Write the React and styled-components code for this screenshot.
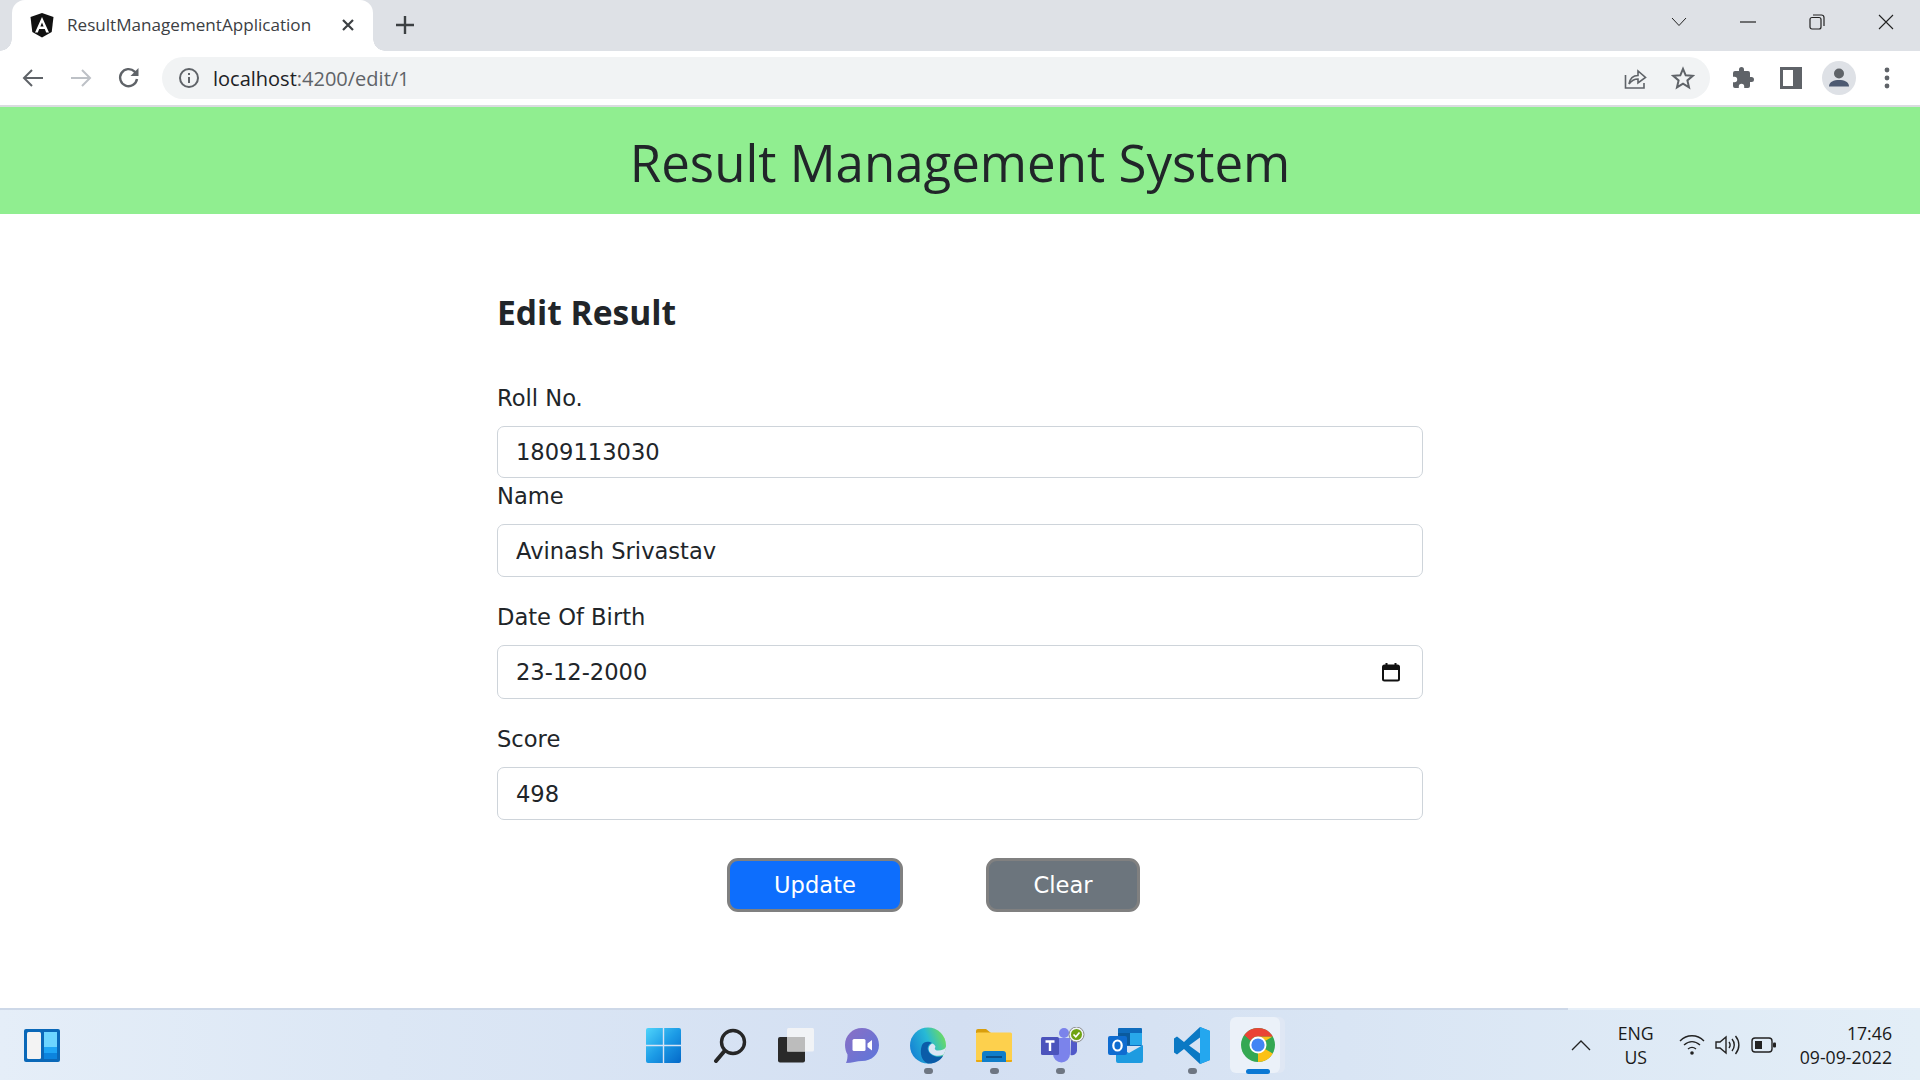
import React from "react";
import styled, { createGlobalStyle } from "styled-components";

const GlobalStyle = createGlobalStyle`
  html, body {
    margin: 0;
    padding: 0;
    overflow: hidden;
    background: #fff;
  }
  * {
    box-sizing: border-box;
  }
`;

const fields = [
  { id: "roll", label: "Roll No.", value: "1809113030", gap: 0, height: 52 },
  { id: "name", label: "Name", value: "Avinash Srivastav", gap: 22, height: 53 },
  { id: "dob", label: "Date Of Birth", value: "23-12-2000", gap: 22, height: 54, date: true },
  { id: "score", label: "Score", value: "498", gap: 0, height: 53 },
];

const AngularIcon = () => (
  <svg width="26" height="26" viewBox="0 0 26 26">
    <path d="M13 1 L24.5 5 L22.7 20 L13 25.5 L3.3 20 L1.5 5 Z" fill="#111" />
    <path d="M13 5 L6 20.5 H8.8 L10.2 17 H15.8 L17.2 20.5 H20 Z M11.4 14.6 L13 10.4 L14.6 14.6 Z" fill="#fff" fillRule="evenodd" />
  </svg>
);

const BackIcon = () => (
  <svg width="24" height="24" viewBox="0 0 24 24" fill="none" stroke="#5f6368" strokeWidth="2">
    <path d="M22 12 H3 M11 4 L3 12 L11 20" />
  </svg>
);

const ForwardIcon = () => (
  <svg width="24" height="24" viewBox="0 0 24 24" fill="none" stroke="#bdc1c6" strokeWidth="2">
    <path d="M2 12 H21 M13 4 L21 12 L13 20" />
  </svg>
);

const ReloadIcon = () => (
  <svg width="24" height="24" viewBox="0 0 24 24" fill="none" stroke="#5f6368" strokeWidth="2.4">
    <path d="M20 13 A8.5 8.5 0 1 1 17.6 5.6 L20 8" />
    <path d="M21.5 2 V10 H13.5 Z" fill="#5f6368" stroke="none" />
  </svg>
);

const InfoIcon = () => (
  <svg width="22" height="22" viewBox="0 0 22 22" fill="none" stroke="#5f6368" strokeWidth="2">
    <circle cx="11" cy="11" r="9" />
    <path d="M11 10 V16" />
    <path d="M11 6 V8" />
  </svg>
);

const ShareIcon = () => (
  <svg width="24" height="24" viewBox="0 0 24 24" fill="none" stroke="#5f6368" strokeWidth="1.6">
    <path d="M2.5 9 V22 H21 V17" />
    <path d="M6 18 C7 12 10 9.5 15 9.5 V5 L22.5 11.5 L15 17 V13 C11.5 13 8.5 14.5 6 18 Z" />
  </svg>
);

const StarIcon = () => (
  <svg width="24" height="24" viewBox="0 0 24 24" fill="none" stroke="#5f6368" strokeWidth="2">
    <path d="M12 2.8 L14.7 9.3 L21.7 9.8 L16.4 14.4 L18 21.3 L12 17.6 L6 21.3 L7.6 14.4 L2.3 9.8 L9.3 9.3 Z" />
  </svg>
);

const PuzzleIcon = () => (
  <svg width="24" height="24" viewBox="0 0 24 24" fill="#5f6368">
    <path d="M20.5 11 H19 V7 a2 2 0 0 0-2-2 h-4 V3.5 a2.5 2.5 0 0 0-5 0 V5 H4 a2 2 0 0 0-2 2 v3.8 h1.5 a2.7 2.7 0 0 1 0 5.4 H2 V20 a2 2 0 0 0 2 2 h3.8 v-1.5 a2.7 2.7 0 0 1 5.4 0 V22 H17 a2 2 0 0 0 2-2 v-4 h1.5 a2.5 2.5 0 0 0 0-5 Z" />
  </svg>
);

const SidePanelIcon = () => (
  <svg width="22" height="22" viewBox="0 0 22 22">
    <path d="M0 0 H22 V22 H0 Z M3 3 V19 H13 V3 Z" fill="#5f6368" fillRule="evenodd" />
  </svg>
);

const ProfileIcon = () => (
  <svg width="34" height="34" viewBox="0 0 34 34">
    <circle cx="17" cy="17" r="17" fill="#dee1e6" />
    <circle cx="17" cy="12.5" r="5" fill="#5f6368" />
    <path d="M7 25.5 C7 20.5 12 19 17 19 C22 19 27 20.5 27 25.5 Z" fill="#4d5a72" />
  </svg>
);

const MenuIcon = () => (
  <svg width="6" height="22" viewBox="0 0 6 22" fill="#5f6368">
    <circle cx="3" cy="3" r="2.4" />
    <circle cx="3" cy="11" r="2.4" />
    <circle cx="3" cy="19" r="2.4" />
  </svg>
);

const CalendarIcon = () => (
  <svg width="20" height="20" viewBox="0 0 20 20" fill="none">
    <rect x="2" y="3.5" width="16" height="15" rx="1.5" stroke="#111" strokeWidth="2" />
    <path d="M2 4 H18 V8 H2 Z" fill="#111" />
    <path d="M5.5 1 V4 M14.5 1 V4" stroke="#111" strokeWidth="2" />
  </svg>
);

const WidgetsIcon = () => (
  <svg width="36" height="33" viewBox="0 0 36 33">
    <rect width="36" height="33" rx="2" fill="#0a68b8" />
    <rect x="3" y="3" width="14" height="27" rx="1.5" fill="#f3f3f3" />
    <rect x="20" y="3" width="13" height="15" fill="#6dd5ff" />
    <rect x="20" y="18" width="13" height="6" fill="#1ea5f5" />
    <rect x="20" y="24" width="13" height="6" fill="#0c84de" />
  </svg>
);

const WindowsIcon = () => (
  <svg width="35" height="35" viewBox="0 0 35 35">
    <defs>
      <linearGradient id="winGrad" gradientUnits="userSpaceOnUse" x1="0" y1="0" x2="35" y2="35">
        <stop offset="0" stopColor="#4fd4fb" />
        <stop offset=".5" stopColor="#1c9be6" />
        <stop offset="1" stopColor="#0468c8" />
      </linearGradient>
    </defs>
    <path d="M0 2 a2 2 0 0 1 2-2 H16.8 V16.800 H0 Z M18.200 0 H33 a2 2 0 0 1 2 2 V16.800 H18.200 Z M0 18.200 H16.800 V35 H2 a2 2 0 0 1-2-2 Z M18.200 18.200 H35 V33 a2 2 0 0 1-2 2 H18.200 Z" fill="url(#winGrad)" />
  </svg>
);

const SearchIcon = () => (
  <svg width="34" height="35" viewBox="0 0 34 35" fill="none" stroke="#262626" strokeLinecap="round">
    <circle cx="20" cy="14" r="11.500" strokeWidth="3.400" />
    <path d="M11.500 23 L3 33" strokeWidth="4" />
  </svg>
);

const TaskViewIcon = () => (
  <svg width="36" height="35" viewBox="0 0 36 35">
    <rect x="0" y="9" width="27" height="25.500" rx="2" fill="#2a2a2a" />
    <rect x="9" y="0" width="27" height="23.500" rx="1.500" fill="#f2f3f6" fillOpacity=".95" />
    <rect x="9" y="9" width="18" height="14.500" fill="#bcbcbc" />
  </svg>
);

const ChatIcon = () => (
  <svg width="34" height="35" viewBox="0 0 34 35">
    <defs>
      <linearGradient id="chatGrad" x1="0" y1="0" x2="1" y2="1">
        <stop offset="0" stopColor="#8b6fc4" />
        <stop offset="1" stopColor="#5b76dc" />
      </linearGradient>
    </defs>
    <path d="M17 0 C26.500 0 34 7.500 34 17 C34 26.500 26.500 33 17 33 C12 33 7 35 1 35 C2.500 32 2.500 29 2.500 26.500 C1 24 0 20.500 0 17 C0 7.500 7.500 0 17 0 Z" fill="url(#chatGrad)" />
    <rect x="7.500" y="11" width="13" height="12" rx="1.500" fill="#fff" />
    <path d="M22.500 15.500 L27 12 V22.500 L22.500 19 Z" fill="#fff" />
  </svg>
);

const EdgeIcon = () => (
  <svg width="36" height="37" viewBox="0 0 36 37">
    <defs>
      <linearGradient id="edgeTop" x1="0" y1=".7" x2="1" y2=".3">
        <stop offset="0" stopColor="#1580d4" />
        <stop offset=".55" stopColor="#27b9d6" />
        <stop offset="1" stopColor="#6fdc5e" />
      </linearGradient>
    </defs>
    <circle cx="18" cy="18.500" r="18" fill="url(#edgeTop)" />
    <path d="M12 18 C14 14 19 14 22 16 C19 17 17 20 18 23 C20 29 27 31 33 29 C30 34 24 37 18 36.500 C12 35 9 26 12 18 Z" fill="#0b5ca8" />
    <path d="M22 16.500 C19 18 18 21 19 24 C21 28.500 28 30 33.500 27.500 C35 25 36 22.500 36 20 C35 22 32 23.500 28 23.500 C25 23.500 24 21.500 25.500 20 C25 18 24 17 22 16.500 Z" fill="#dce6f5" />
  </svg>
);

const FolderIcon = () => (
  <svg width="36" height="33" viewBox="0 0 36 33">
    <path d="M0 2 a2 2 0 0 1 2-2 H10 L15 4 H0 Z" fill="#d99e0c" />
    <rect x="0" y="3.500" width="36" height="29.500" rx="1.500" fill="#fdd04d" />
    <path d="M0 31 H36 V32 a1 1 0 0 1-1 1 H1 a1 1 0 0 1-1-1 Z" fill="#eaa90f" />
    <path d="M6 33 V25 a3 3 0 0 1 3-3 H27 a3 3 0 0 1 3 3 V33 Z" fill="#0f7dc9" />
    <rect x="10" y="27" width="16" height="2" fill="#0a4f88" />
  </svg>
);

const TeamsIcon = () => (
  <svg width="50" height="36" viewBox="-6 0 50 36">
    <circle cx="23" cy="6" r="5" fill="#7b83eb" />
    <path d="M12 11 H29 V27 A8.500 8.500 0 0 1 12 27 Z" fill="#7b83eb" />
    <path d="M30 12 H36 V24 A5 5 0 0 1 29.500 28 Z" fill="#5059c9" />
    <rect x="0" y="10" width="18" height="18" rx="1.500" fill="#4b53bc" />
    <path d="M4.500 14.500 H13.500 M9 14.500 V24" stroke="#fff" strokeWidth="2.400" />
    <circle cx="35.500" cy="7.500" r="7.500" fill="#eef2f8" stroke="#8a8a8a" />
    <circle cx="35.500" cy="7.500" r="5.500" fill="#6fa312" />
    <path d="M32.500 7.500 L34.800 9.800 L38.500 5.500" stroke="#fff" strokeWidth="1.700" fill="none" />
  </svg>
);

const OutlookIcon = () => (
  <svg width="35" height="35" viewBox="0 0 35 35">
    <rect x="10" y="0" width="24" height="18" rx="1" fill="#0f6cbd" />
    <rect x="22" y="5" width="12" height="12" fill="#28a8ea" />
    <rect x="10" y="5" width="12" height="12" fill="#0a5a9e" />
    <path d="M8 18 L21 25 L35 17 V33 a2 2 0 0 1-2 2 H10 a2 2 0 0 1-2-2 Z" fill="#1e9be0" />
    <rect x="0" y="8" width="19" height="19" rx="2" fill="#0f6cd0" />
    <ellipse cx="9.500" cy="17.500" rx="4.200" ry="5" fill="none" stroke="#fff" strokeWidth="2.200" />
  </svg>
);

const VsCodeIcon = () => (
  <svg width="36" height="37" viewBox="0 0 36 37">
    <path d="M26 0 L36 4 V33 L26 37 L10 22 L3 27.500 L0 25.500 V11.500 L3 9.500 L10 15 Z M26 10.500 L15 18.500 L26 26.500 Z" fill="#0b79c4" fillRule="evenodd" />
    <path d="M26 0 L36 4 V33 L26 37 Z" fill="#24a7ef" />
  </svg>
);

const ChromeIcon = () => (
  <svg width="34" height="34" viewBox="0 0 36 36">
    <circle cx="18" cy="18" r="18" fill="#34a853" />
    <path d="M18 18 L33.600 27 A18 18 0 0 0 33.600 9 L18 9 Z M18 18 L33.600 9 A18 18 0 0 1 18 36 Z" fill="#fbc116" />
    <path d="M18 0 A18 18 0 0 1 33.600 9 L18 9 A9 9 0 0 0 10.200 13.500 L3.500 7.500 A18 18 0 0 1 18 0 Z" fill="#ea4335" />
    <circle cx="18" cy="18" r="9" fill="#fff" />
    <circle cx="18" cy="18" r="7" fill="#4285f4" />
  </svg>
);

const taskbarApps = [
  { key: "start", icon: <WindowsIcon /> },
  { key: "search", icon: <SearchIcon /> },
  { key: "taskview", icon: <TaskViewIcon /> },
  { key: "chat", icon: <ChatIcon /> },
  { key: "edge", icon: <EdgeIcon />, running: true },
  { key: "files", icon: <FolderIcon />, running: true },
  { key: "teams", icon: <TeamsIcon />, running: true },
  { key: "outlook", icon: <OutlookIcon /> },
  { key: "vscode", icon: <VsCodeIcon />, running: true },
  { key: "chrome", icon: <ChromeIcon />, active: true },
];

const App = () => {
  return (
    <Page>
      <GlobalStyle />
      <TabStrip>
        <Tab>
          <AngularIcon />
          <TabTitle>ResultManagementApplication</TabTitle>
          <svg width="14" height="14" viewBox="0 0 14 14" stroke="#3c4043" strokeWidth="2.2">
            <path d="M2 2 L12 12 M12 2 L2 12" />
          </svg>
        </Tab>
        <NewTab>
          <svg width="20" height="20" viewBox="0 0 20 20" stroke="#3c4043" strokeWidth="2.4">
            <path d="M10 1 V19 M1 10 H19" />
          </svg>
        </NewTab>
        <WindowControls>
          <WindowButton>
            <svg width="16" height="10" viewBox="0 0 16 10" fill="none" stroke="#222" strokeWidth="1">
              <path d="M1 1 L8 8.500 L15 1" />
            </svg>
          </WindowButton>
          <WindowButton>
            <svg width="16" height="2" viewBox="0 0 16 2" stroke="#222" strokeWidth="1.200">
              <path d="M0 1 H16" />
            </svg>
          </WindowButton>
          <WindowButton>
            <svg width="16" height="16" viewBox="0 0 16 16" fill="none" stroke="#222" strokeWidth="1.200">
              <rect x="1" y="3.500" width="11" height="11.500" rx="2" />
              <path d="M4 1 H12.500 A2.500 2.500 0 0 1 15 3.500 V12" />
            </svg>
          </WindowButton>
          <WindowButton>
            <svg width="16" height="16" viewBox="0 0 16 16" stroke="#222" strokeWidth="1.100">
              <path d="M1 1 L15 15 M15 1 L1 15" />
            </svg>
          </WindowButton>
        </WindowControls>
      </TabStrip>

      <Toolbar>
        <NavButtons>
          <ToolSlot><BackIcon /></ToolSlot>
          <ToolSlot><ForwardIcon /></ToolSlot>
          <ToolSlot><ReloadIcon /></ToolSlot>
        </NavButtons>
        <Omnibox>
          <InfoIcon />
          <UrlText>
            localhost<UrlRest>:4200/edit/1</UrlRest>
          </UrlText>
          <OmniActions>
            <ShareIcon />
            <StarIcon />
          </OmniActions>
        </Omnibox>
        <ToolbarActions>
          <ToolSlot><PuzzleIcon /></ToolSlot>
          <ToolSlot><SidePanelIcon /></ToolSlot>
          <ToolSlot><ProfileIcon /></ToolSlot>
          <ToolSlot><MenuIcon /></ToolSlot>
        </ToolbarActions>
      </Toolbar>

      <SiteHeader>
        <SiteTitle>Result Management System</SiteTitle>
      </SiteHeader>

      <Main>
        <FormColumn>
          <FormTitle>Edit Result</FormTitle>
          {fields.map((field) => (
            <Field key={field.id} $gap={field.gap}>
              <FieldLabel htmlFor={field.id}>{field.label}</FieldLabel>
              <InputWrap>
                <FieldInput id={field.id} $height={field.height} defaultValue={field.value} readOnly />
                {field.date && (
                  <DatePicker>
                    <CalendarIcon />
                  </DatePicker>
                )}
              </InputWrap>
            </Field>
          ))}
          <ButtonRow>
            <FormButton $bg="#0d6efd" $width={176}>Update</FormButton>
            <FormButton $bg="#6c757d" $width={154}>Clear</FormButton>
          </ButtonRow>
        </FormColumn>
      </Main>

      <Taskbar>
        <TaskbarLeft>
          <WidgetsIcon />
        </TaskbarLeft>
        <TaskbarApps>
          {taskbarApps.map((app) => (
            <TaskbarApp key={app.key} $active={app.active}>
              {app.icon}
              {app.running && <RunningDot />}
              {app.active && <ActiveBar />}
            </TaskbarApp>
          ))}
        </TaskbarApps>
        <Tray>
          <svg width="20" height="12" viewBox="0 0 20 12" fill="none" stroke="#222" strokeWidth="1.300">
            <path d="M1 11 L10 2 L19 11" />
          </svg>
          <TrayLang>
            <span>ENG</span>
            <span>US</span>
          </TrayLang>
          <TrayIcons>
            <svg width="26" height="22" viewBox="0 0 26 22" fill="none" stroke="#222" strokeWidth="1.400">
              <path d="M1 7 C8 0 18 0 25 7" />
              <path d="M5 11 C10 6.500 16 6.500 21 11" />
              <path d="M9 15 C11.500 13 14.500 13 17 15" />
              <circle cx="13" cy="19" r="1.800" fill="#222" stroke="none" />
            </svg>
            <svg width="26" height="22" viewBox="0 0 26 22" fill="none" stroke="#222" strokeWidth="1.400">
              <path d="M1 8 H5 L11 3 V19 L5 14 H1 Z" />
              <path d="M14 8 C15.500 10 15.500 12 14 14" />
              <path d="M17 5 C20 8.500 20 13.500 17 17" />
              <path d="M20.500 2 C25 7.500 25 14.500 20.500 20" />
            </svg>
            <svg width="26" height="16" viewBox="0 0 26 16" fill="none">
              <rect x="1" y="1" width="20" height="14" rx="3" stroke="#222" strokeWidth="1.400" />
              <rect x="4" y="4" width="7" height="8" fill="#222" />
              <rect x="22" y="5.500" width="3" height="5" rx="1" fill="#222" />
            </svg>
          </TrayIcons>
          <TrayClock>
            <span>17:46</span>
            <span>09-09-2022</span>
          </TrayClock>
        </Tray>
      </Taskbar>
    </Page>
  );
};

export default App;

const Page = styled.div`
  width: 1920px;
  height: 1080px;
  display: flex;
  flex-direction: column;
  background: #fff;
  color: #212529;
  font-family: "DejaVu Sans", sans-serif;
`;

const TabStrip = styled.div`
  height: 51px;
  flex: none;
  display: flex;
  align-items: stretch;
  background: #dee1e6;
  padding-left: 12px;
`;

const Tab = styled.div`
  position: relative;
  width: 361px;
  display: flex;
  align-items: center;
  gap: 12px;
  padding: 0 18px 2px 17px;
  background: #fff;
  border-radius: 13px 13px 0 0;

  &::before,
  &::after {
    content: "";
    position: absolute;
    bottom: 0;
    width: 12px;
    height: 12px;
  }
  &::before {
    left: -12px;
    background: radial-gradient(circle at 0 0, #dee1e6 11.5px, #fff 12px);
  }
  &::after {
    right: -12px;
    background: radial-gradient(circle at 100% 0, #dee1e6 11.5px, #fff 12px);
  }
`;

const TabTitle = styled.span`
  flex: 1;
  font: 17.1px "Open Sans", sans-serif;
  color: #3c4043;
  white-space: nowrap;
`;

const NewTab = styled.div`
  width: 64px;
  display: flex;
  align-items: center;
  justify-content: center;
  padding-bottom: 2px;
`;

const WindowControls = styled.div`
  margin-left: auto;
  display: flex;
`;

const WindowButton = styled.div`
  width: 69px;
  display: flex;
  align-items: center;
  justify-content: center;
  padding-bottom: 7px;
`;

const Toolbar = styled.div`
  height: 56px;
  flex: none;
  display: flex;
  align-items: center;
  background: #fff;
  border-bottom: 2px solid #dadce0;
`;

const NavButtons = styled.div`
  width: 162px;
  display: flex;
  align-items: center;
  padding-left: 9px;
`;

const ToolSlot = styled.div`
  width: 48px;
  display: flex;
  align-items: center;
  justify-content: center;
`;

const Omnibox = styled.div`
  width: 1548px;
  height: 42px;
  display: flex;
  align-items: center;
  gap: 13px;
  padding: 0 15px 0 16px;
  background: #f1f3f4;
  border-radius: 21px;
`;

const UrlText = styled.span`
  flex: 1;
  font: 20px "Open Sans", sans-serif;
  color: #202124;
`;

const UrlRest = styled.span`
  color: #5f6368;
`;

const OmniActions = styled.div`
  display: flex;
  align-items: center;
  gap: 24px;
`;

const ToolbarActions = styled.div`
  flex: 1;
  display: flex;
  align-items: center;
  padding-left: 9px;
`;

const SiteHeader = styled.header`
  height: 107px;
  flex: none;
  display: flex;
  align-items: center;
  justify-content: center;
  padding-top: 2px;
  background: #90ee90;
`;

const SiteTitle = styled.h1`
  margin: 0;
  font: 400 51px "Open Sans", sans-serif;
  color: #212529;
`;

const Main = styled.main`
  flex: 1;
  display: flex;
  justify-content: center;
`;

const FormColumn = styled.div`
  width: 926px;
  padding-top: 76px;
`;

const FormTitle = styled.h2`
  margin: 0 0 46px;
  font: 700 33.6px "Open Sans", sans-serif;
  line-height: 44px;
  color: #212529;
`;

const Field = styled.div`
  margin-bottom: ${(p) => p.$gap}px;
`;

const FieldLabel = styled.label`
  display: block;
  font-size: 22.6px;
  line-height: 36px;
  margin-bottom: 10px;
`;

const InputWrap = styled.div`
  position: relative;
`;

const FieldInput = styled.input`
  display: block;
  width: 100%;
  height: ${(p) => p.$height}px;
  padding: 0 18px;
  font: 22.6px "DejaVu Sans", sans-serif;
  color: #212529;
  background: #fff;
  border: 1px solid #ced4da;
  border-radius: 7px;
  outline: none;
`;

const DatePicker = styled.span`
  position: absolute;
  right: 22px;
  top: 17px;
  display: flex;
`;

const ButtonRow = styled.div`
  display: flex;
  justify-content: center;
  gap: 83px;
  margin-top: 38px;
  padding-right: 53px;
`;

const FormButton = styled.button`
  width: ${(p) => p.$width}px;
  height: 54px;
  font: 22.6px "DejaVu Sans", sans-serif;
  color: #fff;
  background: ${(p) => p.$bg};
  border: 3px solid #808080;
  border-radius: 11px;
`;

const Taskbar = styled.footer`
  height: 72px;
  flex: none;
  display: grid;
  grid-template-columns: 1fr auto 1fr;
  align-items: center;
  background: linear-gradient(90deg, #e5eef8 0%, #dce7f5 20%, #d3dff2 50%, #d9e5f4 70%, #e3eef7 100%);
  border-top: 2px solid;
  border-image: linear-gradient(90deg, #cdd8e8 1567px, #e6eff8 1567px) 1;
`;

const TaskbarLeft = styled.div`
  display: flex;
  padding-left: 24px;
`;

const TaskbarApps = styled.div`
  display: flex;
  align-items: center;
  margin-left: 1px;
`;

const TaskbarApp = styled.div`
  position: relative;
  width: 66px;
  height: 70px;
  display: flex;
  align-items: center;
  justify-content: center;

  svg {
    position: relative;
  }

  ${(p) => p.$active && `
    &::before {
      content: "";
      position: absolute;
      left: 5px;
      top: 7px;
      width: 50px;
      height: 56px;
      background: #ebf1f9;
      border-radius: 6px;
      box-shadow: 5px 0 0 #dfe7f4;
    }
  `}
`;

const RunningDot = styled.span`
  position: absolute;
  left: 50%;
  bottom: 6px;
  width: 9px;
  height: 6px;
  margin-left: -4px;
  border-radius: 3px;
  background: #6e7682;
`;

const ActiveBar = styled.span`
  position: absolute;
  left: 50%;
  bottom: 6px;
  width: 24px;
  height: 5px;
  margin-left: -12px;
  border-radius: 3px;
  background: #0a78d4;
`;

const Tray = styled.div`
  display: flex;
  align-items: center;
  justify-content: flex-end;
  padding-right: 28px;
  color: #1a1a1a;
  font: 17.7px "Open Sans", sans-serif;
`;

const TrayLang = styled.div`
  display: flex;
  flex-direction: column;
  align-items: center;
  line-height: 24px;
  margin: 0 25px 0 27px;
`;

const TrayIcons = styled.div`
  display: flex;
  align-items: center;
  gap: 10px;
  margin-right: 23px;
`;

const TrayClock = styled.div`
  display: flex;
  flex-direction: column;
  align-items: flex-end;
  line-height: 24px;
`;
